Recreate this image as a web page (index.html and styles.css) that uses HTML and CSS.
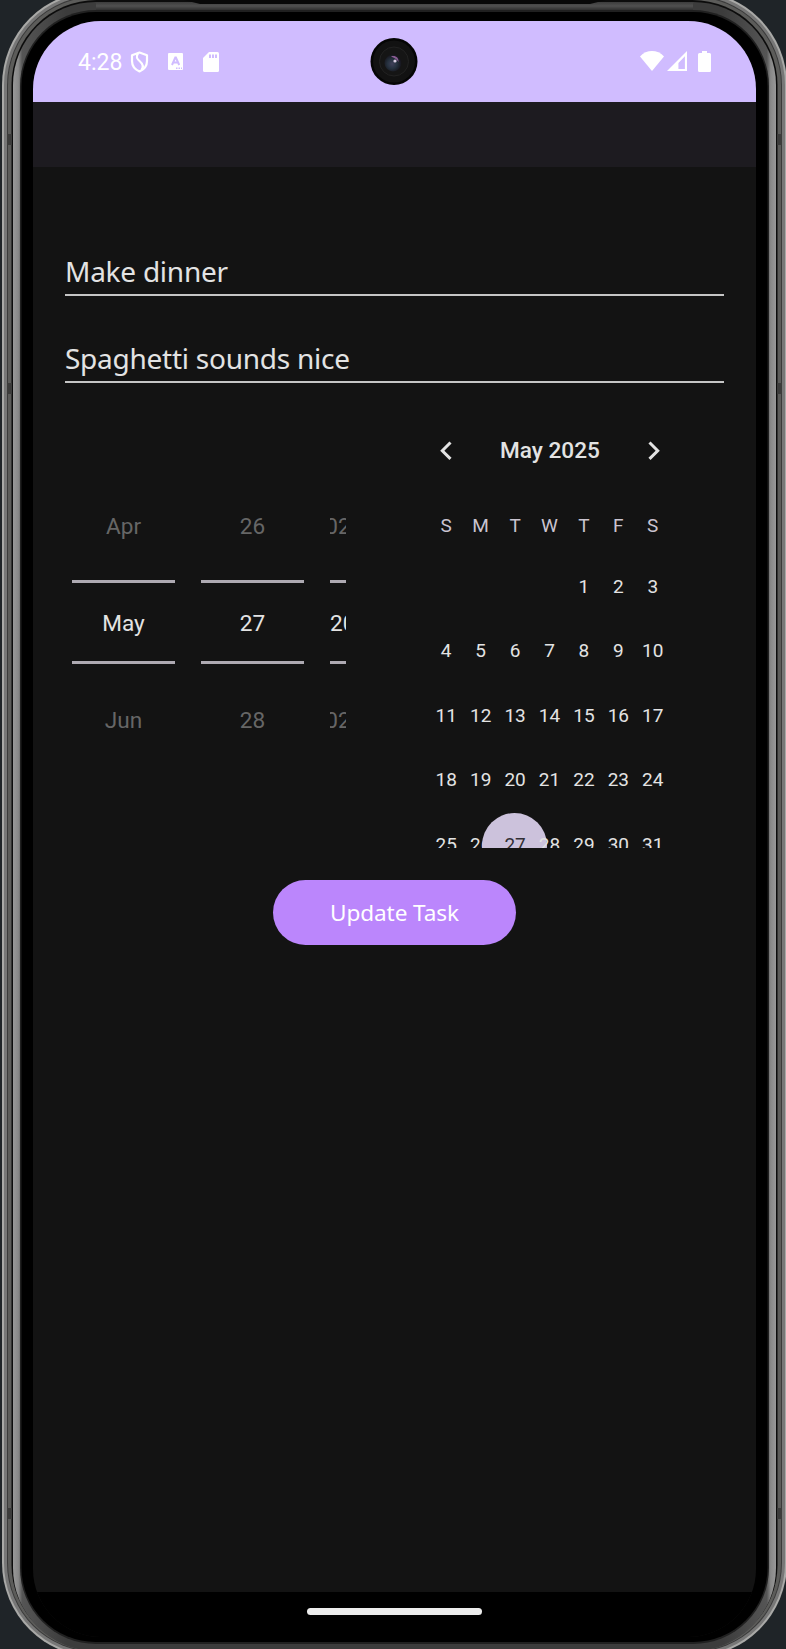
FILE: index.html
```
<!DOCTYPE html>
<html lang="en">
<head>
<meta charset="utf-8">
<title>Update Task</title>
<link rel="stylesheet" href="styles.css">
</head>
<body>
<div class="stage">
  <div class="phone">
    <svg class="shell" width="786" height="1649" viewBox="0 0 786 1649" fill="none">
      <rect x="2" y="-9" width="785" height="1666" rx="94" fill="#a9a9a7"/>
      <rect x="4" y="-7" width="781" height="1662" rx="92" fill="#777"/>
      <rect x="7" y="-4" width="775" height="1656" rx="89" fill="#3a3a3a"/>
      <rect x="8" y="-3" width="773" height="1654" rx="88" fill="#5c5c5a"/>
      <rect x="11.500" y="0" width="766" height="1650" rx="85" fill="#0c0c0c"/>
      <rect x="13" y="2" width="763" height="1649" rx="83" fill="url(#rim)"/>
      <rect x="96" y="2" width="597" height="10" fill="url(#rimtop)"/>
      <rect x="20" y="10" width="749" height="1634" rx="76" fill="#202020"/>
      <rect x="21.500" y="12" width="746" height="1630" rx="74" fill="#000"/>
      <path d="M184 0H606L590 4H200Z" fill="#080808"/>
      <path d="M7 134h5v11H7zM7 383h5v11H7zM7 1508h5v11H7zM777 134h5v11h-5zM777 383h5v11h-5zM777 1508h5v11h-5z" fill="#3c3c3b"/>
      <defs>
        <linearGradient id="rim" x1="13" y1="0" x2="776" y2="0" gradientUnits="userSpaceOnUse">
          <stop offset="0" stop-color="#999"/><stop offset=".007" stop-color="#888"/>
          <stop offset=".012" stop-color="#555"/><stop offset=".07" stop-color="#3c3c3c"/>
          <stop offset=".93" stop-color="#3c3c3c"/><stop offset=".988" stop-color="#555"/>
          <stop offset=".993" stop-color="#888"/><stop offset="1" stop-color="#999"/>
        </linearGradient>
        <linearGradient id="rimtop" x1="0" y1="2" x2="0" y2="12" gradientUnits="userSpaceOnUse">
          <stop offset="0" stop-color="#3c3c3c"/><stop offset=".4" stop-color="#505050"/><stop offset="1" stop-color="#202020"/>
        </linearGradient>
      </defs>
    </svg>
    <main class="screen">
      <header class="status">
        <div class="status-left">
          <span class="clock">4:28</span>
          <svg class="i-shield" width="19" height="22" viewBox="0 0 19 22" fill="none" stroke="#fff" stroke-width="2.200" stroke-linejoin="round"><path d="M9.500 1.500 17 4.300V10c0 5-3 8.500-7.500 10.500C5 18.500 2 15 2 10V4.300Z"/><path d="M8 2.500C5.500 6 7 8 10 10.500s4 5 1.500 8.500"/></svg>
          <svg class="i-a" width="15" height="17" viewBox="0 0 15 17"><rect width="15" height="17" rx="1" fill="#fff"/><path d="M4 12 7.300 4.500h.6L11.200 12M5.300 9.600h4.600" stroke="#d0bcff" stroke-width="2" fill="none"/><path d="M8 14.500h1.500v1.500H8zM10.500 14.500H12v1.500h-1.500zM13 14.500h1v1.500h-1z" fill="#d0bcff"/></svg>
          <svg class="i-sd" width="16" height="20" viewBox="0 0 16 20"><path d="M6 0h8.500A1.500 1.500 0 0 1 16 1.500v17a1.500 1.500 0 0 1-1.500 1.500h-13A1.500 1.500 0 0 1 0 18.500V6Z" fill="#fff"/><path d="M6 2.500h2V6H6zM9 2.500h2V6H9zM12 2.500h2V6h-2z" fill="#d0bcff"/></svg>
        </div>
        <svg class="camera" width="48" height="48" viewBox="0 0 48 48">
          <defs><radialGradient id="lens" cx=".45" cy=".55" r=".55"><stop offset="0" stop-color="#40405a"/><stop offset=".5" stop-color="#263240"/><stop offset="1" stop-color="#15131a"/></radialGradient></defs>
          <circle cx="24" cy="24.500" r="23.500" fill="#050505"/><circle cx="24" cy="24.500" r="21" fill="#121212"/>
          <circle cx="24" cy="24.500" r="14.500" fill="#151515" stroke="#222"/><circle cx="23" cy="26" r="8.500" fill="url(#lens)"/>
          <path d="M21 19.500c4-1.500 8 1 7.500 5.500-1-2-3.500-4-7.500-5.500Z" fill="#8a5b92"/><circle cx="25" cy="24" r="1.600" fill="#d9cce2"/>
        </svg>
        <div class="status-right">
          <svg width="24" height="20" viewBox="0 0 24 20"><path d="M0 5.500C6.500-1.800 17.500-1.800 24 5.500L12 20Z" fill="#fff"/></svg>
          <svg class="i-signal" width="20" height="20" viewBox="0 0 21 21"><path fill-rule="evenodd" d="M21 0v21H0ZM18.800 5.500 12 12.500V18.800h6.800Z" fill="#fff"/></svg>
          <svg class="i-battery" width="13" height="21" viewBox="0 0 13 21"><path d="M4 0h5v2h2.500A1.500 1.500 0 0 1 13 3.500v16a1.500 1.500 0 0 1-1.500 1.500h-10A1.500 1.500 0 0 1 0 19.500v-16A1.500 1.500 0 0 1 1.500 2H4Z" fill="#fff"/></svg>
        </div>
      </header>
      <div class="appbar"></div>
      <section class="form">
        <div class="field"><span>Make dinner</span></div>
        <div class="field"><span>Spaghetti sounds nice</span></div>
        <div class="date">
          <div class="spinners">
            <div class="spinner"><span>Apr</span><b>May</b><span>Jun</span></div>
            <div class="spinner"><span>26</span><b>27</b><span>28</span></div>
            <div class="spinner year"><span>2024</span><b>2025</b><span>2026</span></div>
          </div>
          <div class="calendar">
            <div class="month">
              <svg width="12" height="20" viewBox="0 0 12 20"><path d="M10.500 1.500 2.300 9.700l8.200 8.200" fill="none" stroke="#e3e3e3" stroke-width="3"/></svg>
              <span>May 2025</span>
              <svg width="12" height="20" viewBox="0 0 12 20"><path d="m1.500 1.500 8.200 8.200-8.200 8.200" fill="none" stroke="#e3e3e3" stroke-width="3"/></svg>
            </div>
            <div class="week names"><span>S</span><span>M</span><span>T</span><span>W</span><span>T</span><span>F</span><span>S</span></div>
            <div class="week"><span></span><span></span><span></span><span></span><span>1</span><span>2</span><span>3</span></div>
            <div class="week"><span>4</span><span>5</span><span>6</span><span>7</span><span>8</span><span>9</span><span>10</span></div>
            <div class="week"><span>11</span><span>12</span><span>13</span><span>14</span><span>15</span><span>16</span><span>17</span></div>
            <div class="week"><span>18</span><span>19</span><span>20</span><span>21</span><span>22</span><span>23</span><span>24</span></div>
            <div class="week"><span>25</span><span>26</span><span class="selected">27</span><span class="over">28</span><span>29</span><span>30</span><span>31</span></div>
          </div>
        </div>
        <button class="update" type="button">Update Task</button>
      </section>
      <footer class="nav"><i class="handle"></i></footer>
    </main>
  </div>
</div>
</body>
</html>
```
FILE: styles.css
```
* { box-sizing: border-box; }
body { margin: 0; background: #1f2428; font-family: Roboto, sans-serif; color: #e3e3e3; }
.stage { width: 786px; height: 1649px; overflow: hidden; }
.phone { position: relative; height: 1649px; padding: 21px 30px 0 33px; }
.shell { position: absolute; left: 0; top: 0; }
.screen { position: relative; width: 723px; height: 1616px; border-radius: 68px; overflow: hidden; background: #131313; display: flex; flex-direction: column; }
.status { height: 81px; flex: none; background: #d0bcff; display: flex; position: relative; justify-content: space-between; padding: 0 45px 0 45px; }
.status-left, .status-right { display: flex; align-items: flex-start; padding-top: 30px; }
.clock { font-size: 23px; line-height: 24px; color: #fff; width: 52px; }
.i-a { margin: 2px 0 0 19px; }
.i-sd { margin: 1px 0 0 20px; }
.camera { position: absolute; left: 337px; top: 16px; }
.i-signal { margin-left: 3px; }
.i-battery { margin-left: 11px; }
.appbar { height: 65px; flex: none; background: #1d1b20; }
.form { flex: 1; padding: 65px 32px 0; display: flex; flex-direction: column; }
.field { height: 64px; border-bottom: 2px solid #c5c5c5; margin-bottom: 23px; padding-top: 19px; font: 400 28px/40px "Noto Sans", sans-serif; letter-spacing: -.25px; white-space: nowrap; flex: none; }
.date { height: 442px; display: flex; overflow: hidden; flex: none; }
.spinners { width: 281px; padding: 93px 0 0 7px; display: flex; gap: 26px; overflow: hidden; flex: none; }
.spinner { width: 103px; height: 248px; flex: none; overflow: hidden; display: flex; flex-direction: column; font-size: 22.600px; }
.spinner span { height: 81px; line-height: 55px; color: #666; display: flex; justify-content: center; flex: none; }
.spinner b { height: 84px; border: solid #aeaab2; border-width: 3px 0; font-weight: 400; line-height: 81px; text-align: center; flex: none; }
.spinner b + span { line-height: 113px; }
.year { width: 16px; }
.year b { text-align: left; }
.calendar { width: 241px; margin-left: 83px; flex: none; }
.month { height: 89px; display: flex; align-items: center; justify-content: space-between; padding: 0 10px 0 11px; font-size: 22.600px; font-weight: 500; }
.week { height: 64.600px; display: grid; grid-template-columns: repeat(7, 34.430px); text-align: center; font-size: 19px; line-height: 64.600px; }
.week.names { color: #cac4d0; height: 59.500px; line-height: 61px; }
.selected { position: relative; color: #322f35; z-index: 1; isolation: isolate; }
.selected::before { content: ""; position: absolute; z-index: -1; width: 65px; height: 65px; border-radius: 50%; background: #ccc2dc; left: -15.500px; top: 0; }
.over { position: relative; z-index: 2; }
.update { align-self: center; margin-top: 32px; width: 243px; height: 65px; flex: none; border: 0; border-radius: 33px; background: #bb86fc; color: #fff; font: 400 22.600px "Noto Sans", sans-serif; letter-spacing: -.1px; padding: 0; }
.nav { height: 45px; flex: none; background: #000; display: flex; justify-content: center; padding-top: 16px; }
.handle { width: 175px; height: 7px; border-radius: 4px; background: #ececec; }
```
